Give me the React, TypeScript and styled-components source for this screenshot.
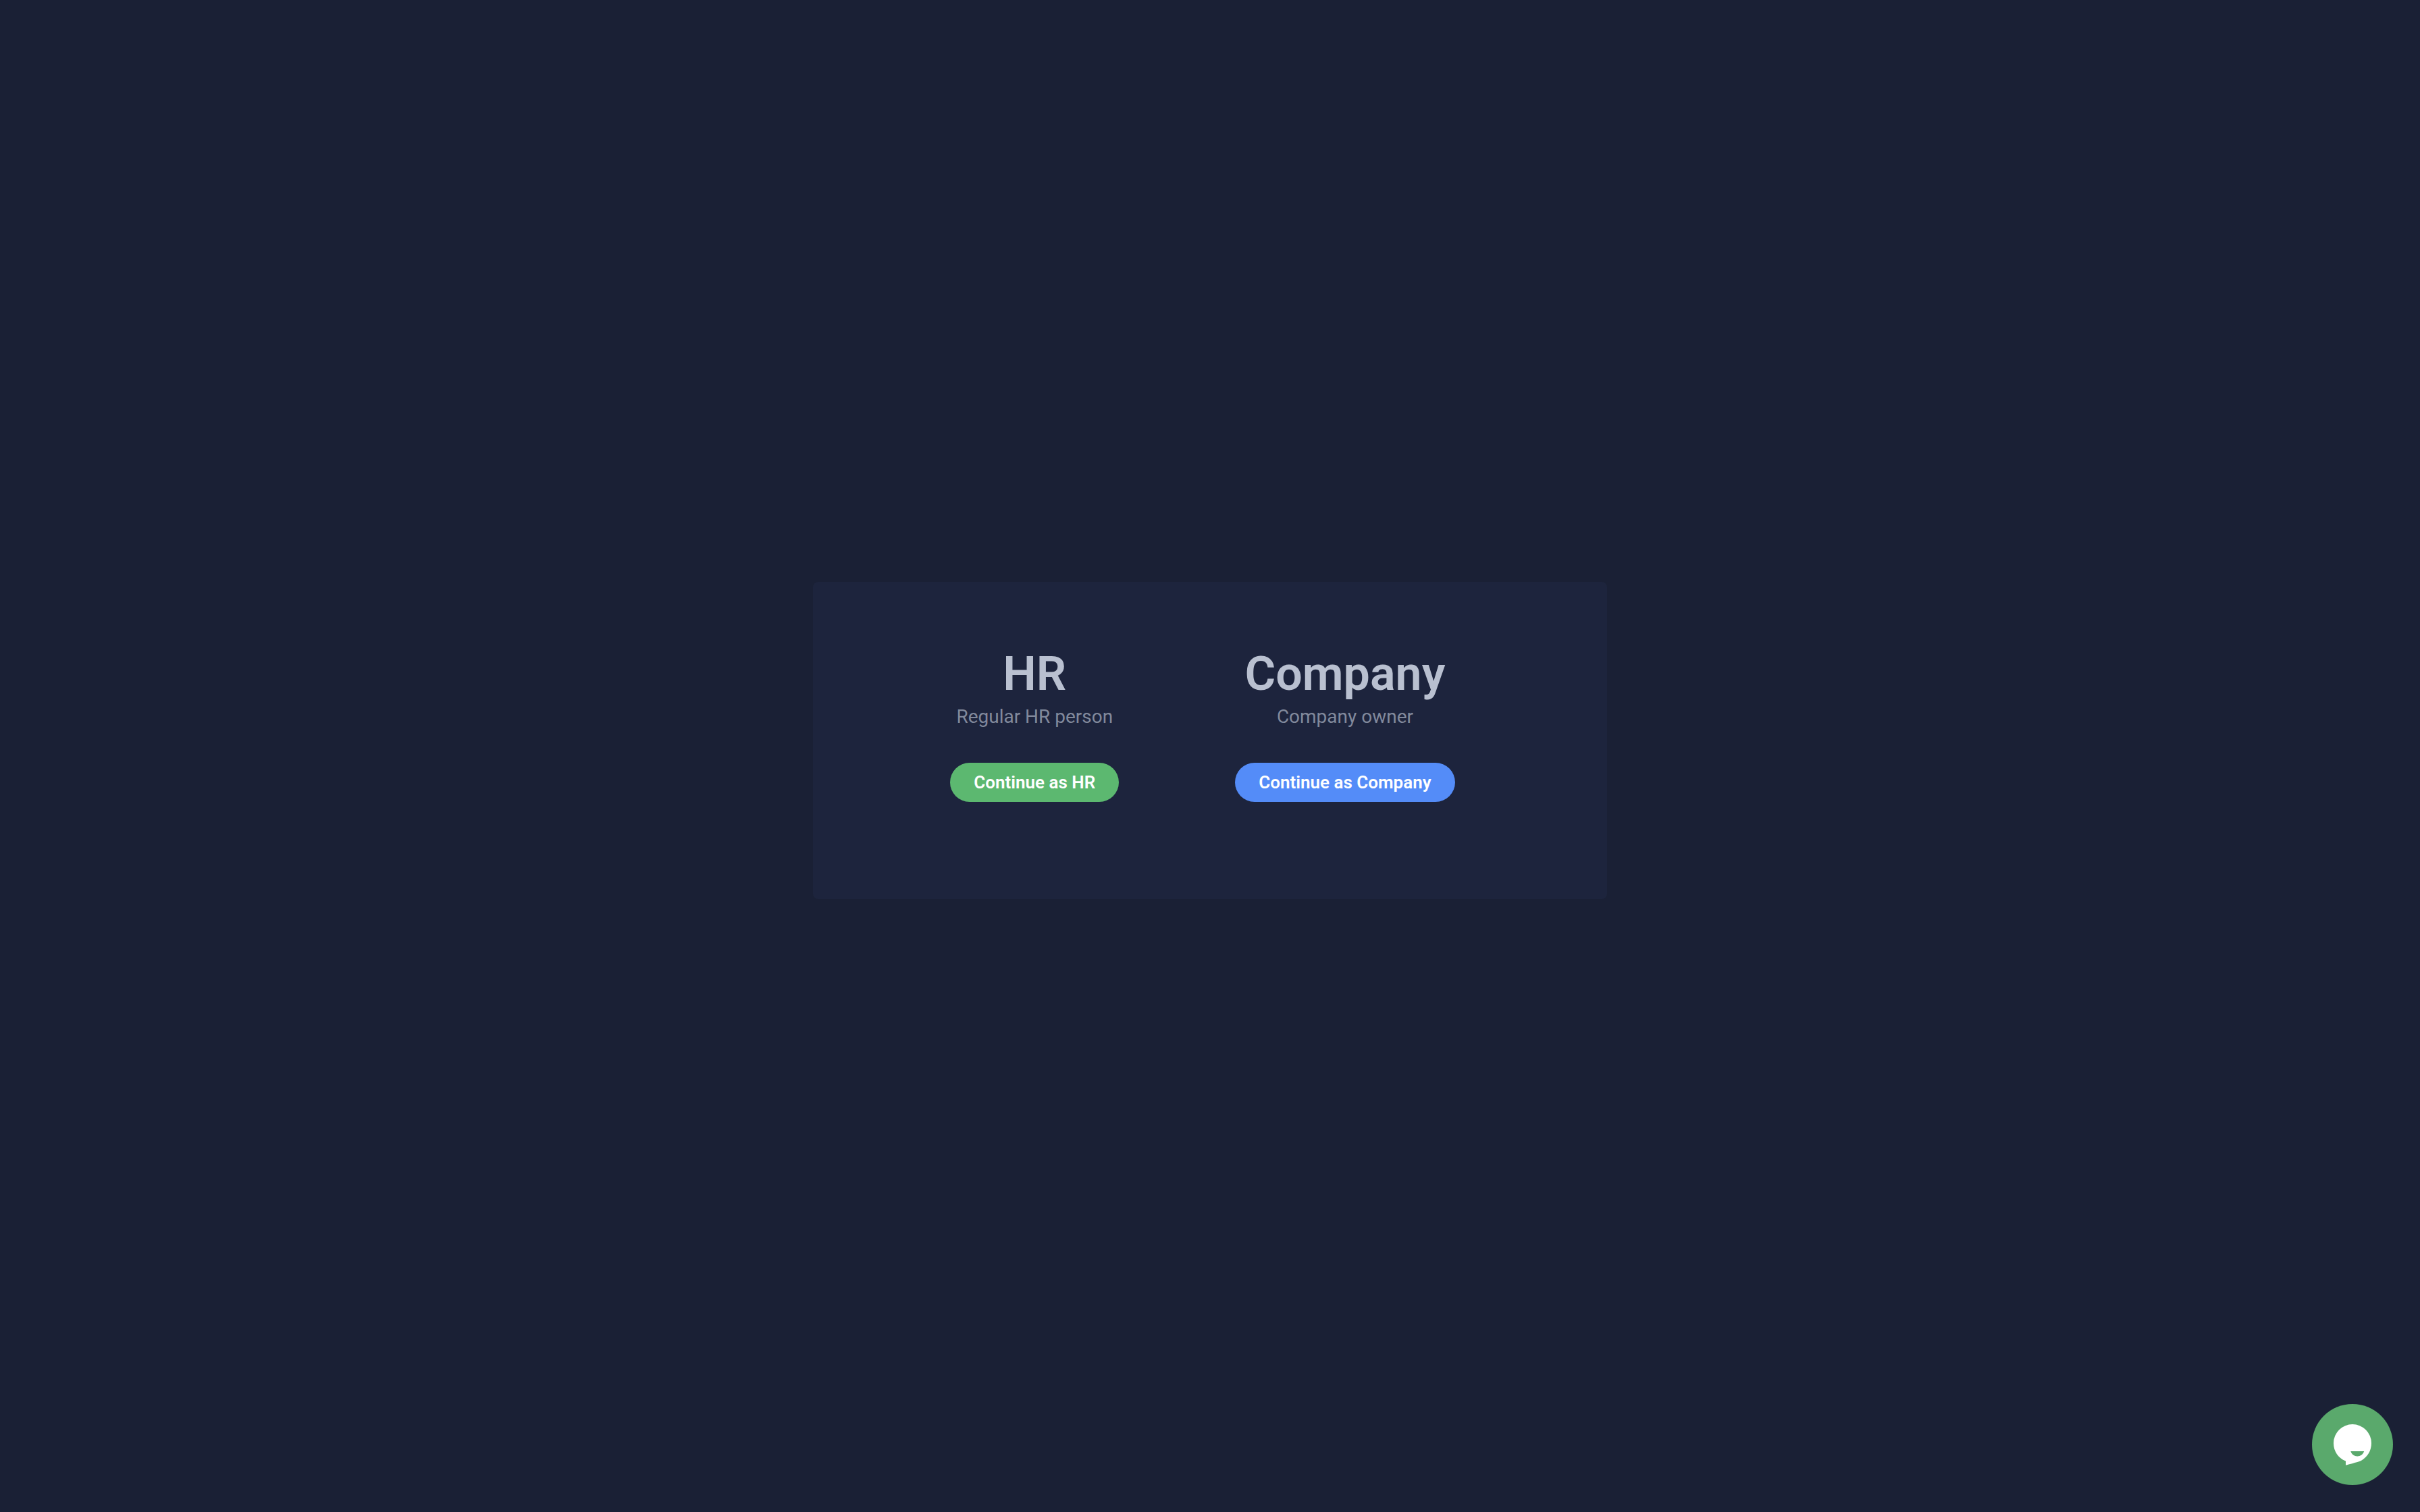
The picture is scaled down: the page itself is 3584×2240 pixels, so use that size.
import React from "react";
import styled, { createGlobalStyle } from "styled-components";

const GlobalStyle = createGlobalStyle`
  * {
    box-sizing: border-box;
  }
  body {
    margin: 0;
    background: #1a2035;
    font-family: Roboto, "Liberation Sans", sans-serif;
  }
`;

const Page = styled.main`
  display: flex;
  align-items: center;
  justify-content: center;
  min-height: 100vh;
  padding: 0 24px 46px;
`;

const Card = styled.section`
  display: flex;
  flex-wrap: wrap;
  justify-content: center;
  gap: 48px 172px;
  width: 100%;
  max-width: 1176px;
  padding: 96px 22px 144px 0;
  border-radius: 8px;
  background: #1d243d;
`;

const Option = styled.article`
  display: flex;
  flex-direction: column;
  align-items: center;
`;

const Title = styled.h2`
  margin: 0 0 4px;
  color: #b9c0d0;
  font-size: 70px;
  font-weight: 600;
  line-height: 80px;
`;

const Description = styled.p`
  margin: 0 0 48px;
  color: #81899c;
  font-size: 28px;
  line-height: 40px;
`;

const ContinueButton = styled.button<{ $color: string }>`
  height: 58px;
  padding: 0 35px;
  border: 0;
  border-radius: 29px;
  background: ${(p) => p.$color};
  color: #ffffff;
  font-family: inherit;
  font-size: 26px;
  font-weight: 600;
  line-height: 40px;
  white-space: nowrap;
  cursor: pointer;
`;

const ChatButton = styled.button`
  position: fixed;
  right: 40px;
  bottom: 40px;
  width: 120px;
  height: 120px;
  padding: 0;
  border: 0;
  border-radius: 50%;
  background: #5aa96c;
  cursor: pointer;

  svg {
    display: block;
  }
`;

const options = [
  { title: "HR", description: "Regular HR person", action: "Continue as HR", color: "#5cb870" },
  { title: "Company", description: "Company owner", action: "Continue as Company", color: "#548cf8" },
];

export default function App() {
  return (
    <>
      <GlobalStyle />
      <Page>
        <Card>
          {options.map((option) => (
            <Option key={option.title}>
              <Title>{option.title}</Title>
              <Description>{option.description}</Description>
              <ContinueButton type="button" $color={option.color}>
                {option.action}
              </ContinueButton>
            </Option>
          ))}
        </Card>
      </Page>
      <ChatButton type="button" aria-label="Open chat">
        <svg width="120" height="120" viewBox="0 0 120 120" aria-hidden="true">
          <path
            d="M60 30a28 28 0 0 1 28 28c0 11-5.500 20-14 25.200C70.500 85.200 65 86.500 50 90.800V84.500C39 80.500 32 70 32 58A28 28 0 0 1 60 30Z"
            fill="#ffffff"
          />
          <path d="M57.300 70H77.200C75.500 74.800 71.800 77.400 67.200 77.400S59 74.800 57.300 70Z" fill="#5aa96c" />
        </svg>
      </ChatButton>
    </>
  );
}
